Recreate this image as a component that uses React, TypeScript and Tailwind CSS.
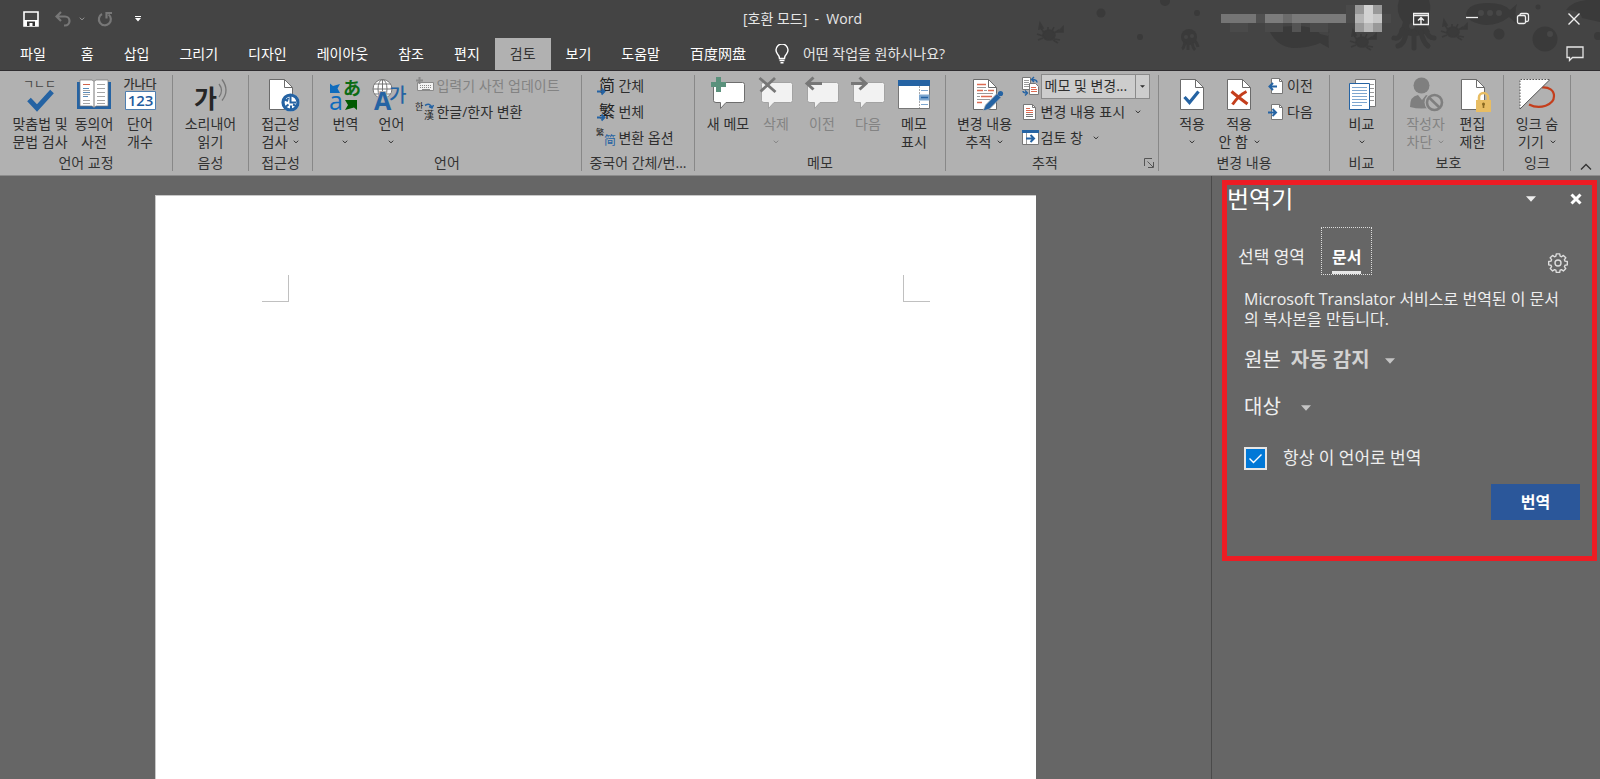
/**
 * Word window - review ribbon, blank document page and the translator pane
 */

import { useState } from 'react';
import type { ReactNode } from 'react';

const KO = '"Open Sans", "Noto Sans CJK KR", sans-serif';
const BLUE = '#2563a3';

const TABS = ['홈', '삽입', '그리기', '디자인', '레이아웃', '참조', '편지', '검토', '보기', '도움말', '百度网盘'];

function Chevron({ className = '' }: { className?: string }) {
  return (
    <svg className={`inline-block h-1 w-1.5 shrink-0 ${className}`} viewBox="0 0 6 4" fill="none" stroke="currentColor">
      <path d="M.8.7 3 2.9 5.2.7" />
    </svg>
  );
}

function Triangle({ className = '' }: { className?: string }) {
  return (
    <svg className={`h-1.5 w-2.5 ${className}`} viewBox="0 0 10 6" fill="currentColor">
      <path d="M0 .3h10L5 5.7z" />
    </svg>
  );
}

/* ---------- large icons, 34 x 34 ---------- */

function Big({ children }: { children: ReactNode }) {
  return (
    <svg className="h-[34px] w-[34px] shrink-0 overflow-visible" viewBox="0 0 34 34" fill="none" fontFamily={KO} aria-hidden="true">
      {children}
    </svg>
  );
}

function Sheet({ x = 5 }: { x?: number }) {
  return (
    <g transform={`translate(${x} 2)`}>
      <path d="M.5.5h15l8 8v22H.5z" fill="#fff" stroke="#6b6b6b" />
      <path d="M15.5.5v8h8" stroke="#6b6b6b" />
    </g>
  );
}

const SpellIcon = () => (
  <Big>
    <text x="0" y="12" fontSize="12" fill="#444">ㄱㄴㄷ</text>
    <path d="m6 22.5 8 8.5L29 14.5" stroke={BLUE} strokeWidth="5" />
  </Big>
);

const BookIcon = () => (
  <Big>
    <path d="M0 5h34v27H0z" fill={BLUE} />
    <path d="M3 3h12l2 1.5L19 3h12v26H19l-2 1.5L15 29H3z" fill="#fff" stroke="#777" strokeWidth=".7" />
    <path d="M17 4.5V30" stroke="#777" />
    <path d="M6 7.5h7" stroke="#d0624a" />
    <path d="M6 11.5h6M6 15.5h7M6 19.5h5" stroke="#5b8bb8" />
    <path d="M6 13.5h7M6 17.5h7M6 23.5h7M6 26.5h7M20 7.5h8M20 11.5h8M20 15.5h8M20 19.5h8M20 23.5h8M20 26.5h8" stroke="#a5a5a5" />
  </Big>
);

const CountIcon = () => (
  <Big>
    <text x="17" y="12" fontSize="12" fontWeight="500" textAnchor="middle" fill="#333">가나다</text>
    <path d="M2.5 14.5h30v18h-30z" fill="#fff" stroke="#4f7fb0" />
    <text x="17.5" y="29" fontSize="15" fontWeight="600" textAnchor="middle" fill="#1f5c9e">123</text>
  </Big>
);

const SpeakIcon = () => (
  <Big>
    <text x="0" y="31" fontSize="25" fontWeight="700" fill="#262626">가</text>
    <path d="M25 7q5 6.5 0 13M28 2.5q8 11 0 21" stroke="#777" strokeWidth="1.3" />
  </Big>
);

const AccessIcon = () => (
  <Big>
    <Sheet />
    <circle cx="26.5" cy="25.5" r="9" fill="#fff" />
    <circle cx="26.5" cy="25.5" r="7.5" stroke={BLUE} strokeWidth="3.2" />
    <path d="M26.5 19v6.5H32M21 22.5l3 1.5M22 29.5l2.5-2M27 32v-3.5M32 29l-3-1.5M23.5 21l1 1.5" stroke={BLUE} strokeWidth="2" />
  </Big>
);

const TranslateIcon = () => (
  <Big>
    <path d="M2 6.5 5 9l7-2-2.5 4.5L12 16H2z" fill="#0f6cbd" />
    <text x="15" y="18" fontSize="18" fontWeight="700" fontFamily='"Noto Sans CJK JP", sans-serif' fill="#0c6b14">あ</text>
    <text x="1" y="33" fontSize="25" fill="#0f6cbd">a</text>
    <path d="M29 23v10l-3-2.5-9 2.5 3-5-3-5z" fill="#005a00" />
  </Big>
);

const LanguageIcon = () => (
  <Big>
    <circle cx="8.5" cy="12" r="9.5" fill="#fff" stroke="#777" />
    <path d="M8.5 2.5v19M-1 12h19M.5 7h16M.5 17h16" stroke="#777" />
    <ellipse cx="8.5" cy="12" rx="4.5" ry="9.5" stroke="#777" />
    <text x="0" y="33" fontSize="25" fontWeight="700" fill={BLUE} stroke="#b1b1b1" strokeWidth="2" paintOrder="stroke">A</text>
    <text x="15" y="25" fontSize="19" fontWeight="500" fill={BLUE}>가</text>
  </Big>
);

function Bubble({ faded }: { faded?: boolean }) {
  return (
    <path
      d="M4 5.5h27.5q2 0 2 2v16q0 2-2 2H15l-5.500 6v-6H5q-2.500 0-2.500-2V7.500q0-2 1.500-2z"
      fill={faded ? '#f2f2f2' : '#fff'}
      stroke={faded ? '#a3a3a3' : '#6e6e6e'}
    />
  );
}

const NewMemoIcon = () => (
  <Big>
    <Bubble />
    <path d="M5 0h5v5h5v5h-5v5H5v-5H0V5h5z" fill="#5a917c" />
  </Big>
);

const DeleteIcon = () => (
  <Big>
    <Bubble faded />
    <path d="m.5 1 16 14M16 1 1.500 14.500" stroke="#777" strokeWidth="2.8" />
  </Big>
);

const PrevIcon = () => (
  <Big>
    <Bubble faded />
    <path d="M17 6.500H2M8.500.5l-6.500 6 6.500 6" stroke="#777" strokeWidth="3" />
  </Big>
);

const NextIcon = () => (
  <Big>
    <Bubble faded />
    <path d="M0 6.500h15M8.500.5l6.500 6-6.500 6" stroke="#777" strokeWidth="3" />
  </Big>
);

const ShowMemoIcon = () => (
  <Big>
    <path d="M1.500 3.500h31v28h-31z" fill="#fff" stroke="#777" />
    <path d="M1 3h32v6H1z" fill={BLUE} />
    <path d="M22.500 9v22" stroke="#aaa" strokeDasharray="2 1" />
    <path d="M22 17.500h10.500v6H22z" fill="#7da6cf" />
    <path d="M24 13.500h7M24 27.500h7" stroke="#7da6cf" />
    <path d="M24 20.500h7" stroke={BLUE} strokeWidth="1.5" />
  </Big>
);

const TrackIcon = () => (
  <Big>
    <Sheet />
    <path d="M9 7.500h9M9 13.500h6M20 13.500h6M13 19.500h11M9 25.500h5" stroke="#dd6b52" strokeWidth="1.3" />
    <path d="M9 10.500h9M16 13.500h3M9 16.500h16M9 19.500h3M9 22.500h13" stroke="#999" />
    <path d="m15 34 2.500-6L29 16.500l4 4L21.500 32z" fill={BLUE} stroke="#b1b1b1" strokeWidth=".8" />
    <circle cx="32.5" cy="16.5" r="2.6" fill={BLUE} />
  </Big>
);

const ApplyIcon = () => (
  <Big>
    <Sheet />
    <path d="m9.500 20 5 5.500 9-11" stroke={BLUE} strokeWidth="3.2" />
  </Big>
);

const RejectIcon = () => (
  <Big>
    <Sheet />
    <path d="M9.500 14.500q6 5 16 12.500M24.500 14.500q-8 4-14 13" stroke="#c43e1c" strokeWidth="3" />
  </Big>
);

const CompareIcon = () => (
  <Big>
    <path d="M10.500 2.500h20v27h-20z" fill="#fff" stroke="#777" />
    <path d="M25 7.500h4M25 11.500h4M25 15.500h4M25 19.500h4M25 23.500h4" stroke="#999" />
    <path d="M4.500 6.500h20v26h-20z" fill="#fff" stroke={BLUE} />
    <path d="M7 10.500h15M7 13.500h15M7 16.500h15M7 19.500h15M7 22.500h15M7 25.500h15M7 28.500h10" stroke="#7da6cf" />
  </Big>
);

const BlockIcon = () => (
  <Big>
    <circle cx="12.5" cy="8.5" r="8" fill="#7f7f7f" />
    <path d="M1 30q0-11 8-12l4 5 4-5q5 1 7 5v7q-11 3-23 0z" fill="#7f7f7f" />
    <circle cx="25.5" cy="25.5" r="10" fill="#b1b1b1" />
    <circle cx="25.5" cy="25.5" r="7.5" stroke="#7f7f7f" strokeWidth="2.6" />
    <path d="m20 20.500 11 10.500" stroke="#7f7f7f" strokeWidth="2.6" />
  </Big>
);

const RestrictIcon = () => (
  <Big>
    <Sheet />
    <path d="M23 23v-2.500a4.500 4.500 0 0 1 9 0V23" stroke="#e8bd63" strokeWidth="2.6" />
    <path d="M20 23h15v12H20z" fill="#e8bd63" />
    <path d="M27.500 27v4" stroke="#8a6a22" strokeWidth="1.6" />
    <circle cx="27.5" cy="27" r="1.5" fill="#8a6a22" />
  </Big>
);

const InkIcon = () => (
  <Big>
    <path d="M9 27.500C20 33 34 28 34 19 34 13 29 10 22 10.500" stroke="#c43e1c" strokeWidth="2.2" />
    <path d="M0 2.500h30L0 32z" fill="#fff" />
    <path d="M30 2.500 0 32" stroke="#555" />
    <path d="M0 32V2.500h30" stroke="#555" strokeDasharray="1.5 1.5" />
  </Big>
);

/* ---------- small icons, 18 x 18 ---------- */

function Small({ children }: { children: ReactNode }) {
  return (
    <svg className="h-[18px] w-[18px] shrink-0 overflow-visible" viewBox="0 0 18 18" fill="none" fontFamily={KO} aria-hidden="true">
      {children}
    </svg>
  );
}

const KeyboardIcon = () => (
  <Small>
    <path d="M1.500 5.500h16v8h-16z" fill="#f2f2f2" stroke="#8a8a8a" />
    <path d="M4 8.500h12M4 10.500h12" stroke="#8a8a8a" strokeDasharray="1 1" />
    <path d="M6 12.500h8" stroke="#8a8a8a" />
    <path d="M3.500 0v7M0 3.500h7" stroke="#8a8a8a" strokeWidth="2" />
  </Small>
);

const HanjaIcon = () => (
  <Small>
    <text x="-1" y="7" fontSize="9" fill="#222">한</text>
    <text x="8" y="16" fontSize="10" fill="#222">漢</text>
    <path d="M9 2.500q5-3 7 2M13 3.500l3 1.500 1.500-3" stroke={BLUE} strokeWidth="1.5" />
  </Small>
);

const SimplifiedIcon = () => (
  <Small>
    <text x="1" y="14" fontSize="16" fill="#222">简</text>
    <path d="M-1 14.500h7M3.500 11.500l3 3-3 3" stroke={BLUE} strokeWidth="1.8" />
  </Small>
);

const TraditionalIcon = () => (
  <Small>
    <text x="1" y="14" fontSize="16" fill="#222">繁</text>
    <path d="M-1 14.500h7M3.500 11.500l3 3-3 3" stroke={BLUE} strokeWidth="1.8" />
  </Small>
);

const OptionsIcon = () => (
  <Small>
    <text x="-2" y="6" fontSize="8" fill="#222">繁</text>
    <text x="6" y="16" fontSize="12" fill={BLUE}>简</text>
  </Small>
);

const MarkupIcon = () => (
  <Small>
    <path d="M1.500.5h8v12h-8z" fill="#fff" stroke="#777" />
    <path d="M3 3.500h5M3 5.500h5M3 7.500h5M3 9.500h5" stroke="#999" />
    <path d="M8.500 6.500h6l3 3v8h-9z" fill="#fff" stroke="#777" />
    <path d="M10 10.500h5M10 12.500h6M10 14.500h6" stroke="#dd6b52" />
    <path d="M16 5.500q0-3-5-3M13 0l-2.500 2.500L13 5M2 14q0 2 4 2M4 13.500 6.500 16 4 18.500" stroke={BLUE} strokeWidth="1.4" />
  </Small>
);

const ShowMarkupIcon = () => (
  <Small>
    <path d="M2.500 1.500h9l3 3v12h-12z" fill="#fff" stroke="#777" />
    <path d="M11.500 1.500v3h3M5 13.500h7M5 11.500h7" stroke="#777" />
    <path d="M5 5.500h4M5 7.500h7M5 9.500h7" stroke="#dd6b52" />
  </Small>
);

const PaneIcon = () => (
  <Small>
    <path d="M1.500 2.500h16v13h-16z" fill="#fff" stroke="#777" />
    <path d="M1 1h17v3H1z" fill={BLUE} />
    <path d="M5.500 4v11" stroke="#999" />
    <path d="M5 9.500h8M9.500 6l3.500 3.500L9.500 13" stroke={BLUE} strokeWidth="2" />
  </Small>
);

function StepIcon({ back }: { back?: boolean }) {
  return (
    <Small>
      <path d="M4.500 1.500h8l3 3v12h-11z" fill="#fff" stroke="#777" />
      <path d="M12.500 1.500v3h3" stroke="#777" />
      <path
        d={back ? 'M10 9.500H3M6 6 2.500 9.500 6 13' : 'M1 9.500h7M5.500 6 9 9.500 5.500 13'}
        stroke={BLUE}
        strokeWidth="2"
      />
    </Small>
  );
}

/* ---------- ribbon parts ---------- */

interface BigButtonProps {
  icon: ReactNode;
  lines: string[];
  width: string;
  arrow?: boolean;
  disabled?: boolean;
}

function BigButton({ icon, lines, width, arrow, disabled }: BigButtonProps) {
  return (
    <button
      disabled={disabled}
      className={`flex shrink-0 flex-col items-center pt-1 leading-[18px] whitespace-nowrap ${width} ${disabled ? 'text-[#838383]' : ''}`}
    >
      {icon}
      <span className="mt-1">{lines[0]}</span>
      <span className="flex h-[18px] items-center gap-1.5">
        {lines[1]}
        {arrow && <Chevron />}
      </span>
    </button>
  );
}

interface RowButtonProps {
  icon: ReactNode;
  label: string;
  arrow?: boolean;
  disabled?: boolean;
}

function RowButton({ icon, label, arrow, disabled }: RowButtonProps) {
  return (
    <button
      disabled={disabled}
      className={`flex h-[26px] items-center gap-0.5 whitespace-nowrap ${disabled ? 'text-[#838383]' : ''}`}
    >
      {icon}
      {label}
      {arrow && <Chevron className="ml-2" />}
    </button>
  );
}

interface GroupProps {
  label: string;
  width: string;
  launcher?: boolean;
  children: ReactNode;
}

function Group({ label, width, launcher, children }: GroupProps) {
  return (
    <section aria-label={label} className={`flex shrink-0 ${width}`}>
      <div className="flex min-w-0 flex-1 flex-col pt-0.5">
        <div className="flex h-20 justify-center">{children}</div>
        <div className="flex h-6 items-center text-[#333]">
          <span className="flex-1 text-center whitespace-nowrap">{label}</span>
          {launcher && (
            <button aria-label={`${label} 옵션`} className="mr-1">
              <svg className="h-2.5 w-2.5" viewBox="0 0 10 10" fill="none" stroke="#555">
                <path d="M.5 8V.5H8M3.500 3.500 9 9M9.500 4v5.500H4" />
              </svg>
            </button>
          )}
        </div>
      </div>
      <div className="my-1 w-px bg-[#888]" />
    </section>
  );
}

/* ---------- header ---------- */

function Crab({ x, y }: { x: number; y: number }) {
  return (
    <g transform={`translate(${x} ${y})`} stroke="#3a3a3a" strokeWidth="1.6" fill="none">
      <ellipse rx="6" ry="5" fill="#3a3a3a" />
      <path d="M-5-2-8-7M5-2l5-3M-6 1l-6-2M-6 3l-5 2M5 4l6 1M4 5l5 3M-1-4v-4M3-4l2-4" />
      <path d="m-10-6 1-6 3 5zM9-3l5-5v5z" fill="#3a3a3a" />
    </g>
  );
}

function SeaArt() {
  return (
    <svg className="pointer-events-none absolute top-0 right-0 h-[70px] w-[600px]" viewBox="0 0 600 70" fill="#3a3a3a" aria-hidden="true">
      <circle cx="101" cy="13" r="4.5" />
      <circle cx="165" cy="1" r="5" />
      <circle cx="197" cy="13" r="3" />
      <circle cx="140" cy="37" r="3" />
      <Crab x={49} y={35} />
      <circle cx="189" cy="37" r="8" />
      <path d="M185 42q-1 6-3 7M188 43v7M192 43q1 5 3 7M195 41q2 2 3 6" stroke="#3a3a3a" strokeWidth="3" />
      <circle cx="186" cy="37" r="2" fill="#444" />
      <circle cx="192" cy="36" r="2" fill="#444" />
      <path d="M270 32q4-6 25-6t25 8l8 2q2-4 1-8-1 12 0 20l-9-5q-10 5-28 5-15-2-22-16z" />
      <Crab x={362} y={42} />
      <path d="M399 0h30q4 12-4 22l5 10q-18 8-30 0l3-10q-8-10-4-22z" />
      <path d="M402 30q-2 10-8 8M406 32q-1 12-8 14M414 32v16M421 32q2 10 7 14M426 30q2 8 8 8" fill="none" stroke="#3a3a3a" strokeWidth="5" strokeLinecap="round" />
      <circle cx="412" cy="26" r="3" fill="#444" />
      <path d="M466 14q2-11 22-11 16 0 22 7l7-6q-3 8 0 20l-8-7q-10 8-23 8-18-2-20-11z" />
      <circle cx="481" cy="13" r="3" fill="#474747" />
      <circle cx="490" cy="13" r="3" fill="#474747" />
      <circle cx="499" cy="13" r="3" fill="#474747" />
      <Crab x={453} y={32} />
      <circle cx="499" cy="34" r="5.5" />
      <circle cx="545" cy="39" r="12.5" />
      <circle cx="550" cy="34" r="3" fill="#474747" />
      <circle cx="538" cy="7" r="2.5" />
      <path d="M566 10q8-12 34-10v22l-18-4q-2-8-16-8z" />
      <circle cx="598" cy="36" r="4" />
    </svg>
  );
}

/* Pixelated account name and avatar */
function Account() {
  return (
    <svg className="h-8 w-[172px]" viewBox="0 0 172 32" aria-label="계정" role="img">
      <path d="M0 11h35v9H0z" fill="#757575" />
      <path d="M35 11h9v9h-9z" fill="#505050" />
      <path d="M44 11h18v9H44z" fill="#7c7c7c" />
      <path d="M62 11h9v9h-9z" fill="#6c6c6c" />
      <path d="M71 11h54v9H71z" fill="#7a7a7a" />
      <path d="M9 20h18v9H9zM44 20h18v9H44zM89 20h18v9H89z" fill="#4a4a4a" />
      <path d="M71 20h9v9h-9z" fill="#545454" />
      <path d="M125 2h9v18h-9zM161 11h9v9h-9z" fill="#4a4a4a" />
      <path d="M134 2h27v27h-27z" fill="#999" />
      <path d="M143 2h9v27h-9z" fill="#d2d2d2" />
      <path d="M134 11h9v9h-9z" fill="#b5b5b5" />
      <path d="M152 11h9v9h-9z" fill="#c6c6c6" />
      <path d="M143 20h9v9h-9z" fill="#b8b8b8" />
    </svg>
  );
}

function TitleBar() {
  return (
    <div className="relative flex h-[38px] items-center">
      <div className="flex flex-1 items-center pl-[23px]">
        <button aria-label="저장">
          <svg className="h-4 w-4" viewBox="0 0 16 16" fill="none">
            <path d="M1 1h14v14H1z" stroke="#fff" strokeWidth="1.6" />
            <path d="M1 9h14v6H1z" fill="#fff" />
            <path d="M4 10.500h8V15H4z" fill="#333" />
            <path d="M6.500 12h3v3h-3z" fill="#fff" />
          </svg>
        </button>
        <button aria-label="실행 취소" className="ml-4 text-[#777]">
          <svg className="h-4 w-4" viewBox="0 0 16 16" fill="none" stroke="currentColor" strokeWidth="2.2">
            <path d="M6 1 1.500 5.500 6 10M2 5.500h8a4.500 4.500 0 0 1 0 9H9" />
          </svg>
        </button>
        <button aria-label="실행 취소 목록" className="ml-2 flex text-[#999]">
          <Chevron />
        </button>
        <button aria-label="다시 실행" className="ml-3 text-[#777]">
          <svg className="h-4 w-4" viewBox="0 0 16 16" fill="none" stroke="currentColor" strokeWidth="2.2">
            <path d="M5 3a6 6 0 1 0 6.500.5M9.500 7.500V2H15" />
          </svg>
        </button>
        <button aria-label="빠른 실행 도구 모음 사용자 지정" className="ml-[22px]">
          <svg className="h-1.5 w-1.5" viewBox="0 0 6 6" fill="#fff">
            <path d="M0 0h6v1H0zM0 2h6L3 5.500z" />
          </svg>
        </button>
      </div>
      <h1 className="whitespace-pre text-[#e6e6e6]">{'[호환 모드]  -  Word'}</h1>
      <div className="relative flex flex-1 items-center justify-end pr-[18px]">
        <Account />
        <button aria-label="리본 메뉴 표시 옵션" className="ml-5">
          <svg className="h-4 w-4" viewBox="0 0 16 16" fill="none" stroke="#f0f0f0">
            <path d="M.5 2.500h15v11H.5zM.5 4.500h15M8 13V7M5 9.500l3-3 3 3" strokeWidth="1.4" />
          </svg>
        </button>
        <button aria-label="최소화" className="ml-[35px]">
          <svg className="h-4 w-4" viewBox="0 0 16 16" stroke="#f0f0f0">
            <path d="M2 6.500h12" strokeWidth="1.3" />
          </svg>
        </button>
        <button aria-label="이전 크기로 복원" className="ml-[35px]">
          <svg className="h-4 w-4" viewBox="0 0 16 16" fill="none" stroke="#f0f0f0" strokeWidth="1.3">
            <rect x="2.5" y="4.5" width="8" height="8" rx="1.5" />
            <path d="M5 4.500V4q0-1.500 1.500-1.500h5q2 0 2 2V9q0 1.500-1.500 1.500h-1" />
          </svg>
        </button>
        <button aria-label="닫기" className="ml-[35px]">
          <svg className="h-4 w-4" viewBox="0 0 16 16" stroke="#f0f0f0" strokeWidth="1.4">
            <path d="m2.500 2.500 11 11M13.500 2.500l-11 11" />
          </svg>
        </button>
      </div>
    </div>
  );
}

function TabBar({ active, onSelect }: { active: string; onSelect: (tab: string) => void }) {
  return (
    <nav className="relative flex h-8 items-stretch text-white">
      <button className="px-5">파일</button>
      {TABS.map((tab) => (
        <button
          key={tab}
          onClick={() => onSelect(tab)}
          className={`px-[15px] ${tab === active ? 'bg-[#b1b1b1] text-[#333]' : ''}`}
        >
          {tab}
        </button>
      ))}
      <button className="ml-3.5 flex items-center gap-3.5 text-[#e6e6e6]">
        <svg className="h-5 w-3.5" viewBox="0 0 14 20" fill="none" stroke="#fff" strokeWidth="1.4">
          <path d="M4.500 14.500q0-2.500-2-4.500a6 6 0 1 1 9 0q-2 2-2 4.500zM4.500 16.500h5M5.500 18.700h3" />
        </svg>
        어떤 작업을 원하시나요?
      </button>
      <button aria-label="메모" className="mr-4 ml-auto">
        <svg className="h-[18px] w-[18px]" viewBox="0 0 18 18" fill="none" stroke="#e6e6e6" strokeWidth="1.3">
          <path d="M1 2h16v10.500H6.500l-3 3v-3H1z" />
        </svg>
      </button>
    </nav>
  );
}

function Ribbon() {
  return (
    <div className="flex h-[105px] overflow-hidden border-b border-[#8c8c8c] bg-[#b1b1b1] text-[#2e2e2e]">
      <Group label="언어 교정" width="w-[173px]">
        <BigButton icon={<SpellIcon />} lines={['맞춤법 및', '문법 검사']} width="w-[60px]" />
        <BigButton icon={<BookIcon />} lines={['동의어', '사전']} width="w-12" />
        <BigButton icon={<CountIcon />} lines={['단어', '개수']} width="w-11" />
      </Group>
      <Group label="음성" width="w-[76px]">
        <BigButton icon={<SpeakIcon />} lines={['소리내어', '읽기']} width="w-[60px]" />
      </Group>
      <Group label="접근성" width="w-16">
        <BigButton icon={<AccessIcon />} lines={['접근성', '검사']} width="w-12" arrow />
      </Group>
      <Group label="언어" width="w-[269px]">
        <BigButton icon={<TranslateIcon />} lines={['번역']} width="w-[46px]" arrow />
        <BigButton icon={<LanguageIcon />} lines={['언어']} width="w-[46px]" arrow />
        <div className="mr-3 ml-0.5">
          <RowButton icon={<KeyboardIcon />} label="입력기 사전 업데이트" disabled />
          <RowButton icon={<HanjaIcon />} label="한글/한자 변환" />
        </div>
      </Group>
      <Group label="중국어 간체/번..." width="w-[113px]">
        <div className="mr-1">
          <RowButton icon={<SimplifiedIcon />} label="간체" />
          <RowButton icon={<TraditionalIcon />} label="번체" />
          <RowButton icon={<OptionsIcon />} label="변환 옵션" />
        </div>
      </Group>
      <Group label="메모" width="w-[251px]">
        <BigButton icon={<NewMemoIcon />} lines={['새 메모']} width="w-[50px]" />
        <BigButton icon={<DeleteIcon />} lines={['삭제']} width="w-[46px]" arrow disabled />
        <BigButton icon={<PrevIcon />} lines={['이전']} width="w-[46px]" disabled />
        <BigButton icon={<NextIcon />} lines={['다음']} width="w-[46px]" disabled />
        <BigButton icon={<ShowMemoIcon />} lines={['메모', '표시']} width="w-[46px]" />
      </Group>
      <Group label="추적" width="w-[213px]" launcher>
        <BigButton icon={<TrackIcon />} lines={['변경 내용', '추적']} width="w-[60px]" arrow />
        <div className="ml-1.5">
          <div className="flex h-[26px] items-center gap-0.5">
            <MarkupIcon />
            <div className="relative">
              <select
                aria-label="검토용 표시"
                className="h-[25px] w-[109px] appearance-none border border-[#8a8a8a] bg-[#cdcdcd] pl-[3px]"
              >
                <option>메모 및 변경...</option>
              </select>
              <span className="pointer-events-none absolute inset-y-0 right-0 flex w-[15px] items-center justify-center border-l border-[#8a8a8a]">
                <Triangle className="h-[3px] w-[5px]" />
              </span>
            </div>
          </div>
          <RowButton icon={<ShowMarkupIcon />} label="변경 내용 표시" arrow />
          <RowButton icon={<PaneIcon />} label="검토 창" arrow />
        </div>
      </Group>
      <Group label="변경 내용" width="w-[171px]">
        <BigButton icon={<ApplyIcon />} lines={['적용']} width="w-[46px]" arrow />
        <BigButton icon={<RejectIcon />} lines={['적용', '안 함']} width="w-12" arrow />
        <div className="mr-1.5 ml-1">
          <RowButton icon={<StepIcon back />} label="이전" />
          <RowButton icon={<StepIcon />} label="다음" />
        </div>
      </Group>
      <Group label="비교" width="w-16">
        <BigButton icon={<CompareIcon />} lines={['비교']} width="w-12" arrow />
      </Group>
      <Group label="보호" width="w-[110px]">
        <BigButton icon={<BlockIcon />} lines={['작성자', '차단']} width="w-12" arrow disabled />
        <BigButton icon={<RestrictIcon />} lines={['편집', '제한']} width="w-[46px]" />
      </Group>
      <Group label="잉크" width="w-[67px]">
        <BigButton icon={<InkIcon />} lines={['잉크 숨', '기기']} width="w-12" arrow />
      </Group>
      <button aria-label="리본 메뉴 축소" className="mr-2 mb-1 ml-auto self-end">
        <svg className="h-2 w-3" viewBox="0 0 12 8" fill="none" stroke="#333" strokeWidth="1.3">
          <path d="m1 6.500 5-5 5 5" />
        </svg>
      </button>
    </div>
  );
}

/* ---------- translator pane ---------- */

function TranslatorPane() {
  const [tab, setTab] = useState('문서');
  const [always, setAlways] = useState(true);

  return (
    <aside className="w-[389px] shrink-0 border-l border-[#4a4a4a] pt-1 pr-[3px] pl-2.5 text-[#eee]">
      <div className="border-[5px] border-[#ed1c24] pb-9">
        <header className="flex h-7 items-center">
          <h2 className="flex-1 text-2xl text-white">번역기</h2>
          <button aria-label="작업창 옵션" className="mr-[34px]">
            <Triangle />
          </button>
          <button aria-label="닫기" className="mr-2.5">
            <svg className="h-3 w-3" viewBox="0 0 12 12" stroke="#fff" strokeWidth="3">
              <path d="m1.500 1.500 9 9M10.500 1.500l-9 9" />
            </svg>
          </button>
        </header>

        <div className="mt-3.5 flex h-12 items-center pl-[11px]">
          {['선택 영역', '문서'].map((name) => (
            <button
              key={name}
              onClick={() => setTab(name)}
              className={
                name === tab
                  ? 'flex h-12 items-end border border-dotted border-[#ddd] px-2.5 text-base font-bold text-white'
                  : 'mr-4 pt-3 text-[17px]'
              }
            >
              {name === tab ? <span className="border-b-3 border-[#e6e6e6] leading-7">{name}</span> : name}
            </button>
          ))}
          <button aria-label="설정" className="mt-6 mr-6 ml-auto">
            <svg className="h-5 w-5" viewBox="0 0 20 20" fill="none" stroke="#ddd" strokeWidth="1.4" strokeLinejoin="round">
              <path d="M8.300 1.500h3.400l.4 2.300 1.400.6 1.900-1.400 2.400 2.400-1.400 1.900.6 1.400 2.300.4v3.400l-2.300.4-.6 1.400 1.400 1.900-2.400 2.400-1.900-1.400-1.400.6-.4 2.300H8.300l-.4-2.300-1.400-.6-1.900 1.400-2.400-2.400 1.400-1.900-.6-1.400-2.300-.4V9.100L3 8.700l.6-1.400-1.400-1.900L4.600 3l1.900 1.400 1.400-.6z" transform="translate(0 -.6)" />
              <circle cx="10" cy="10" r="3" />
            </svg>
          </button>
        </div>

        <div className="pr-3 pl-[17px]">
          <p className="mt-3.5 mr-1 text-base leading-5">
            Microsoft Translator 서비스로 번역된 이 문서
            <br />의 복사본을 만듭니다.
          </p>
          <div className="mt-4 flex h-[30px] items-center text-xl">
            <label htmlFor="source">원본</label>
            <div className="relative ml-2.5">
              <select id="source" className="w-[104px] appearance-none font-bold text-[#d2d2d2]">
                <option>자동 감지</option>
              </select>
              <Triangle className="pointer-events-none absolute top-3 right-0 text-[#c4c4c4]" />
            </div>
          </div>
          <div className="mt-[17px] flex h-[30px] items-center text-xl">
            <label htmlFor="target">대상</label>
            <div className="relative ml-2.5">
              <select id="target" className="w-5 appearance-none font-bold" />
              <Triangle className="pointer-events-none absolute top-3 right-0 text-[#c4c4c4]" />
            </div>
          </div>
          <div className="mt-6 flex h-6 items-center">
            <span className="relative flex">
              <input
                id="always"
                type="checkbox"
                checked={always}
                onChange={() => setAlways(!always)}
                className="h-[23px] w-[23px] appearance-none border-2 border-[#e6e6e6] checked:bg-[#0078d7]"
              />
              {always && (
                <svg className="pointer-events-none absolute inset-0" viewBox="0 0 23 23" fill="none" stroke="#fff" strokeWidth="1.4">
                  <path d="m5.500 11.500 4 4 8-8" />
                </svg>
              )}
            </span>
            <label htmlFor="always" className="ml-4 text-[17px]">항상 이 언어로 번역</label>
          </div>
          <button className="mt-3.5 ml-auto block h-9 w-[89px] bg-[#2b579a] text-base font-bold text-white">번역</button>
        </div>
      </div>
    </aside>
  );
}

export default function App() {
  const [tab, setTab] = useState('검토');

  return (
    <div className="flex h-screen flex-col overflow-hidden bg-[#666] font-['Open_Sans','Noto_Sans_CJK_KR','Noto_Sans_CJK_SC',sans-serif] text-sm">
      <header className="relative border-b border-[#2f2d30] bg-[#444]">
        <SeaArt />
        <TitleBar />
        <TabBar active={tab} onSelect={setTab} />
      </header>
      <Ribbon />
      <div className="flex min-h-0 flex-1">
        <main className="flex min-w-0 flex-1 justify-center pt-[19px] pr-5">
          <div className="flex w-[881px] items-start justify-between border-t border-l border-[#c8c8c8] bg-white px-[106px] pt-[79px]">
            <span className="h-[27px] w-[27px] border-r border-b border-[#c0c0c0]" />
            <span className="h-[27px] w-[27px] border-b border-l border-[#c0c0c0]" />
          </div>
        </main>
        <TranslatorPane />
      </div>
    </div>
  );
}
